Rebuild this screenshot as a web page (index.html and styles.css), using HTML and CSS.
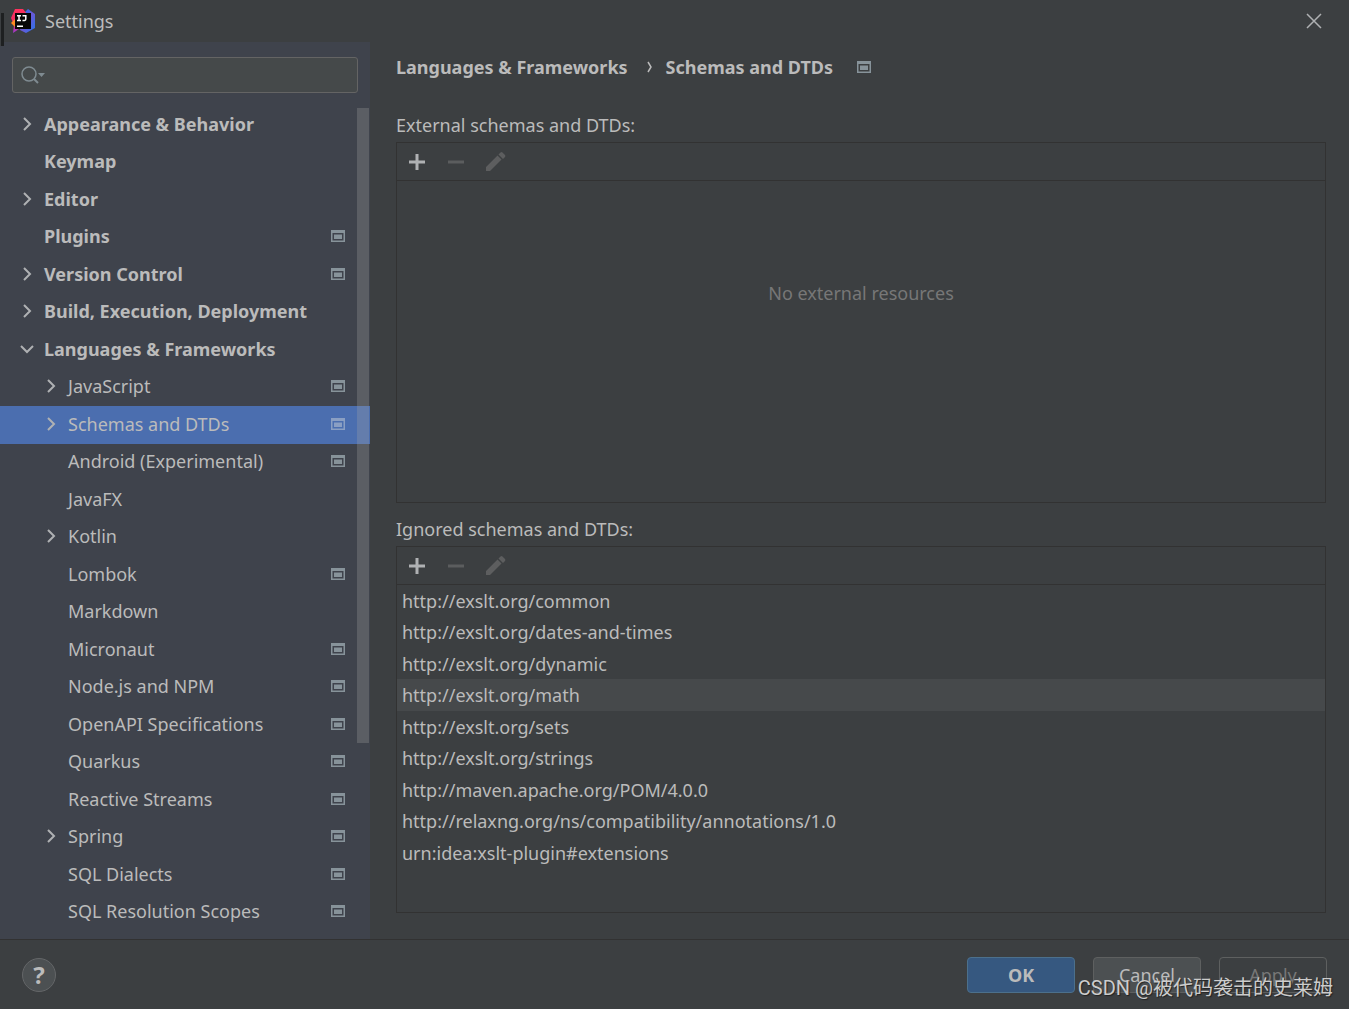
FILE: index.html
```html
<!DOCTYPE html>
<html lang="en">
<head>
<meta charset="utf-8">
<title>Settings</title>
<link rel="stylesheet" href="styles.css">
</head>
<body>
<svg class="sprite" aria-hidden="true">
  <symbol id="chevron" viewBox="0 0 16 16"><path d="M5 2l6 6-6 6" fill="none" stroke="#afb1b3" stroke-width="2"/></symbol>
  <symbol id="chevron-down" viewBox="0 0 16 16"><path d="M2 5l6 6 6-6" fill="none" stroke="#afb1b3" stroke-width="2"/></symbol>
  <symbol id="project" viewBox="0 0 14 12"><path fill="currentColor" fill-rule="evenodd" d="M0 0h14v12H0zM1.500 3v7.500h11V3z"/><path fill="currentColor" d="M3 4.500h8v4.500H3z"/></symbol>
  <symbol id="plus" viewBox="0 0 24 24"><path d="M4 12h16M12 4v16" stroke="#afb1b3" stroke-width="3"/></symbol>
  <symbol id="minus" viewBox="0 0 24 24"><path d="M4 12h16" stroke="#5b5d5e" stroke-width="3"/></symbol>
  <symbol id="pencil" viewBox="0 0 24 24"><path fill="#5d5e5f" d="M3 17L14.500 5.500l4 4L7 21H3zM15.500 4.500l2-2q1-1 2 0l2.500 2.500q.8 1 0 2l-2 2z"/></symbol>
</svg>
<div class="window">
  <header class="titlebar">
    <svg class="logo" viewBox="0 0 24 24" aria-hidden="true">
      <defs>
        <linearGradient id="blue" x1="0" y1="0" x2="1" y2="1"><stop offset="0" stop-color="#087cfa"/><stop offset=".5" stop-color="#6b57d6"/><stop offset="1" stop-color="#2377ee"/></linearGradient>
        <linearGradient id="red" x1="0" y1="0" x2="0" y2="1"><stop offset="0" stop-color="#fe315d"/><stop offset=".5" stop-color="#f22b64"/><stop offset="1" stop-color="#9a3bd0"/></linearGradient>
      </defs>
      <path fill="url(#blue)" d="M13 4l4-4 7 5v14l-9 5-6-3z"/>
      <path fill="url(#red)" d="M4 0h8l4 5-8 15-6 4 1-8-3-7z"/>
      <path fill="#ff8b22" d="M0 14l4-4v8z"/>
      <path fill="#080808" d="M4 4h16v16H4z"/>
      <path fill="none" stroke="#fff" stroke-width="1.500" d="M6 6.700h4M8 6.500v5M6 11.500h4M11.500 6.700h3.300v3.300q0 2-3.300 1.500"/>
      <path fill="#fff" d="M6 16.500h6V18H6z"/>
    </svg>
    <h1 class="title">Settings</h1>
    <button class="close" type="button" aria-label="Close"><svg viewBox="0 0 16 16"><path d="M1 1l14 14M15 1L1 15" stroke="#afb1b3" stroke-width="1.500"/></svg></button>
  </header>
  <div class="content">
    <aside class="sidebar">
      <div class="search">
        <svg viewBox="0 0 26 20" aria-hidden="true"><circle cx="9" cy="9" r="7" fill="none" stroke="#7f8b91" stroke-width="1.500"/><path d="M14 14l4 4" stroke="#7f8b91" stroke-width="2"/><path d="M18 8h7l-3.500 4z" fill="#7f8b91"/></svg>
        <input type="text" aria-label="Search settings">
      </div>
      <nav class="tree-wrap" aria-label="Settings categories">
        <ul class="tree">
          <li><a class="row top" href="#"><svg class="arrow"><use href="#chevron"/></svg><span>Appearance &amp; Behavior</span></a></li>
          <li><a class="row top" href="#"><svg class="arrow"></svg><span>Keymap</span></a></li>
          <li><a class="row top" href="#"><svg class="arrow"><use href="#chevron"/></svg><span>Editor</span></a></li>
          <li><a class="row top" href="#"><svg class="arrow"></svg><span>Plugins</span><svg class="project"><use href="#project"/></svg></a></li>
          <li><a class="row top" href="#"><svg class="arrow"><use href="#chevron"/></svg><span>Version Control</span><svg class="project"><use href="#project"/></svg></a></li>
          <li><a class="row top" href="#"><svg class="arrow"><use href="#chevron"/></svg><span>Build, Execution, Deployment</span></a></li>
          <li><a class="row top" href="#"><svg class="arrow"><use href="#chevron-down"/></svg><span>Languages &amp; Frameworks</span></a></li>
          <li><a class="row child" href="#"><svg class="arrow"><use href="#chevron"/></svg><span>JavaScript</span><svg class="project"><use href="#project"/></svg></a></li>
          <li><a class="row child selected" href="#" aria-current="page"><svg class="arrow"><use href="#chevron"/></svg><span>Schemas and DTDs</span><svg class="project"><use href="#project"/></svg></a></li>
          <li><a class="row child" href="#"><svg class="arrow"></svg><span>Android (Experimental)</span><svg class="project"><use href="#project"/></svg></a></li>
          <li><a class="row child" href="#"><svg class="arrow"></svg><span>JavaFX</span></a></li>
          <li><a class="row child" href="#"><svg class="arrow"><use href="#chevron"/></svg><span>Kotlin</span></a></li>
          <li><a class="row child" href="#"><svg class="arrow"></svg><span>Lombok</span><svg class="project"><use href="#project"/></svg></a></li>
          <li><a class="row child" href="#"><svg class="arrow"></svg><span>Markdown</span></a></li>
          <li><a class="row child" href="#"><svg class="arrow"></svg><span>Micronaut</span><svg class="project"><use href="#project"/></svg></a></li>
          <li><a class="row child" href="#"><svg class="arrow"></svg><span>Node.js and NPM</span><svg class="project"><use href="#project"/></svg></a></li>
          <li><a class="row child" href="#"><svg class="arrow"></svg><span>OpenAPI Specifications</span><svg class="project"><use href="#project"/></svg></a></li>
          <li><a class="row child" href="#"><svg class="arrow"></svg><span>Quarkus</span><svg class="project"><use href="#project"/></svg></a></li>
          <li><a class="row child" href="#"><svg class="arrow"></svg><span>Reactive Streams</span><svg class="project"><use href="#project"/></svg></a></li>
          <li><a class="row child" href="#"><svg class="arrow"><use href="#chevron"/></svg><span>Spring</span><svg class="project"><use href="#project"/></svg></a></li>
          <li><a class="row child" href="#"><svg class="arrow"></svg><span>SQL Dialects</span><svg class="project"><use href="#project"/></svg></a></li>
          <li><a class="row child" href="#"><svg class="arrow"></svg><span>SQL Resolution Scopes</span><svg class="project"><use href="#project"/></svg></a></li>
        </ul>
        <div class="scrollbar"></div>
      </nav>
    </aside>
    <main class="main">
      <div class="breadcrumb">
        <a href="#">Languages &amp; Frameworks</a>
        <svg class="separator" viewBox="0 0 6 12" aria-hidden="true"><path d="M1 1l3 5-3 5" fill="none" stroke="#bbb" stroke-width="1.500"/></svg>
        <h2>Schemas and DTDs</h2>
        <svg class="project"><use href="#project"/></svg>
      </div>
      <h3 class="label">External schemas and DTDs:</h3>
      <section class="panel grow">
        <div class="toolbar">
          <button type="button" aria-label="Add"><svg><use href="#plus"/></svg></button>
          <button type="button" aria-label="Remove" disabled><svg><use href="#minus"/></svg></button>
          <button type="button" aria-label="Edit" disabled><svg><use href="#pencil"/></svg></button>
        </div>
        <p class="empty">No external resources</p>
      </section>
      <h3 class="label second">Ignored schemas and DTDs:</h3>
      <section class="panel">
        <div class="toolbar">
          <button type="button" aria-label="Add"><svg><use href="#plus"/></svg></button>
          <button type="button" aria-label="Remove" disabled><svg><use href="#minus"/></svg></button>
          <button type="button" aria-label="Edit" disabled><svg><use href="#pencil"/></svg></button>
        </div>
        <ul class="list">
          <li>http://exslt.org/common</li>
          <li>http://exslt.org/dates-and-times</li>
          <li>http://exslt.org/dynamic</li>
          <li class="hover">http://exslt.org/math</li>
          <li>http://exslt.org/sets</li>
          <li>http://exslt.org/strings</li>
          <li>http://maven.apache.org/POM/4.0.0</li>
          <li>http://relaxng.org/ns/compatibility/annotations/1.0</li>
          <li>urn:idea:xslt-plugin#extensions</li>
        </ul>
      </section>
    </main>
  </div>
  <footer class="footer">
    <button class="help" type="button" aria-label="Help">?</button>
    <div class="actions">
      <button class="button primary" type="button">OK</button>
      <button class="button" type="button">Cancel</button>
      <button class="button" type="button" disabled>Apply</button>
    </div>
    <span class="watermark">CSDN @被代码袭击的史莱姆</span>
  </footer>
</div>
</body>
</html>
```
FILE: styles.css
```css
* { box-sizing: border-box; }
body, h1, h2, h3, p, ul { margin: 0; padding: 0; }
body {
  background: #3c3f41;
  color: #bbbbbb;
  font: 18px/24px "Noto Sans", "Open Sans", sans-serif;
}
h1, h3 { font-size: 18px; font-weight: 400; }
ul { list-style: none; }
a { color: inherit; text-decoration: none; }
button { font: inherit; color: inherit; padding: 0; border: 0; background: none; }
svg { display: block; flex: none; }
.sprite { position: absolute; width: 0; height: 0; }

.window { min-height: 100vh; display: flex; flex-direction: column; }
.titlebar {
  position: relative;
  height: 42px;
  display: flex;
  align-items: center;
  padding: 0 27px 0 11px;
}
.titlebar::before {
  content: "";
  position: absolute;
  left: 0;
  top: 13px;
  width: 3px;
  height: 33px;
  background: #1e2021;
  border-left: 1px solid #3c3f41;
}
.logo { width: 24px; height: 24px; }
.title { flex: 1; margin-left: 10px; }
.close svg { width: 16px; height: 16px; }

.content { flex: 1; display: flex; }
.sidebar { width: 370px; flex: none; background: #3f434c; padding: 15px 0 8px; }
.search {
  height: 36px;
  margin: 0 12px 13px;
  display: flex;
  align-items: center;
  padding-left: 7px;
  border: 1px solid #646464;
  border-radius: 3px;
  background: #45494a;
}
.search svg { width: 26px; height: 20px; }
.search input {
  flex: 1;
  min-width: 0;
  border: 0;
  outline: 0;
  background: none;
  color: inherit;
  font: inherit;
}

.tree-wrap { position: relative; }
.tree li { height: 38px; }
.tree li:nth-child(even) { height: 37px; }
.row { height: 100%; display: flex; align-items: center; padding: 0 25px 3px 19px; }
.row.child { padding-left: 43px; }
.row.top { font-weight: 700; }
.row span { flex: 1; margin-left: 9px; white-space: nowrap; }
.row.selected { background: #4b6eaf; }
.arrow { width: 16px; height: 16px; }
.project { width: 14px; height: 12px; color: #87939a; }
.selected .project { color: #8a9fc3; }
.scrollbar {
  position: absolute;
  top: 2px;
  right: 1px;
  width: 12px;
  height: 77%;
  background: rgba(166, 166, 166, .28);
}

.main { flex: 1; min-width: 0; display: flex; flex-direction: column; padding: 13px 23px 26px 26px; }
.breadcrumb { display: flex; align-items: center; font-weight: 700; margin-bottom: 34px; }
.breadcrumb h2 { font-size: 18px; }
.separator { width: 6px; height: 12px; margin: 0 13px 0 19px; }
.breadcrumb .project { margin-left: 24px; }
.label { margin-bottom: 5px; }
.label.second { margin-top: 14px; }
.panel { border: 1px solid #323232; }
.panel.grow { flex: 1; }
.toolbar { height: 38px; display: flex; gap: 15px; align-items: center; padding-left: 8px; border-bottom: 1px solid #323232; }
.toolbar svg { width: 24px; height: 24px; }
.empty { padding-top: 100px; text-align: center; color: #777777; }
.list { padding-bottom: 44px; }
.list li { height: 31px; line-height: 32px; padding-left: 5px; }
.list li:nth-child(even) { height: 32px; }
.list .hover { background: #46494b; }

.footer {
  position: relative;
  height: 70px;
  display: flex;
  align-items: center;
  justify-content: space-between;
  padding: 0 22px;
  border-top: 1px solid #323232;
}
.help {
  width: 34px;
  height: 34px;
  border: 1px solid #646668;
  border-radius: 50%;
  background: #4c5052;
  font-size: 24px;
  font-weight: 700;
}
.actions { display: flex; gap: 18px; }
.button { width: 108px; height: 36px; border: 1px solid #5e6060; border-radius: 4px; background: #4c5052; }
.button.primary { background: #365880; border-color: #4c708c; font-weight: 700; }
.button:disabled { background: none; color: #777777; }
.watermark {
  position: absolute;
  right: 16px;
  bottom: 9px;
  font: 20px/24px Roboto, "Noto Sans CJK SC", sans-serif;
  color: #cccccc;
  text-shadow: 1px 1px 1px #222222;
}
```
